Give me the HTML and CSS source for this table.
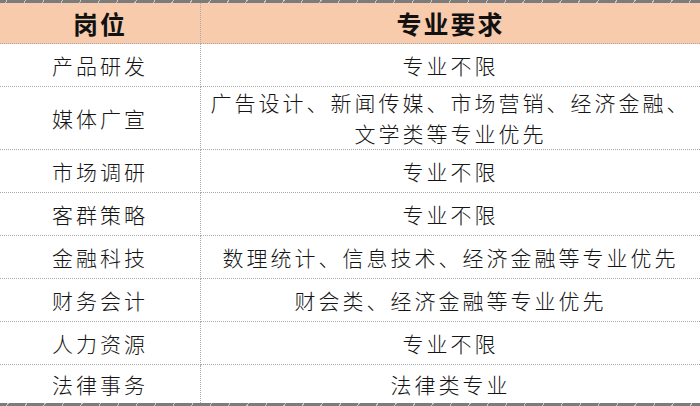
FILE: index.html
```html
<!DOCTYPE html>
<html lang="zh">
<head>
<meta charset="utf-8">
<link rel="stylesheet" href="styles.css">
</head>
<body>
<div class="page">
  <div class="band band-top"></div>
  <table class="req">
    <thead>
      <tr class="head"><th class="c1">岗位</th><th class="c2">专业要求</th></tr>
    </thead>
    <tbody>
      <tr class="r"><td>产品研发</td><td>专业不限</td></tr>
      <tr class="r2"><td>媒体广宣</td><td>广告设计、新闻传媒、市场营销、经济金融、<br>文学类等专业优先</td></tr>
      <tr class="r"><td>市场调研</td><td>专业不限</td></tr>
      <tr class="r"><td>客群策略</td><td>专业不限</td></tr>
      <tr class="r"><td>金融科技</td><td>数理统计、信息技术、经济金融等专业优先</td></tr>
      <tr class="r"><td>财务会计</td><td>财会类、经济金融等专业优先</td></tr>
      <tr class="r"><td>人力资源</td><td>专业不限</td></tr>
      <tr class="r last"><td>法律事务</td><td>法律类专业</td></tr>
    </tbody>
  </table>
  <div class="band band-bottom"></div>
</div>
</body>
</html>
```
FILE: styles.css
```css
html, body {
  margin: 0;
  padding: 0;
  background: #ffffff;
}
.page {
  width: 700px;
  height: 406px;
  display: flex;
  flex-direction: column;
  overflow: hidden;
  font-family: "Noto Sans CJK SC", "Noto Sans", sans-serif;
  color: #151515;
}
.band {
  background-color: #7c7c7c;
  background-image: repeating-linear-gradient(-60deg, #7c7c7c 0 9px, #c9c9c9 9px 10px, #7c7c7c 10px 16px);
  flex: none;
}
.band-top { height: 3px; }
.band-bottom { flex: 1; min-height: 5px; }
.req {
  width: 700px;
  border-collapse: collapse;
  table-layout: fixed;
}
.req th, .req td {
  padding: 0;
  text-align: center;
  border-bottom: 1px dotted #a9a9a9;
  border-right: 1px dotted #a9a9a9;
}
.req th:last-child, .req td:last-child { border-right: none; }
.c1 { width: 200px; }
.head th {
  background: #f8cbad;
  height: 40px;
  font-size: 25px;
  font-weight: 700;
  letter-spacing: 2px;
  color: #111;
}
.req td {
  font-size: 21px;
  font-weight: 300;
  letter-spacing: 3px;
  line-height: 31px;
}
.r td { height: 42px; }
.r2 td { height: 62px; }
.last td { border-bottom: none; height: 38px; }
```
